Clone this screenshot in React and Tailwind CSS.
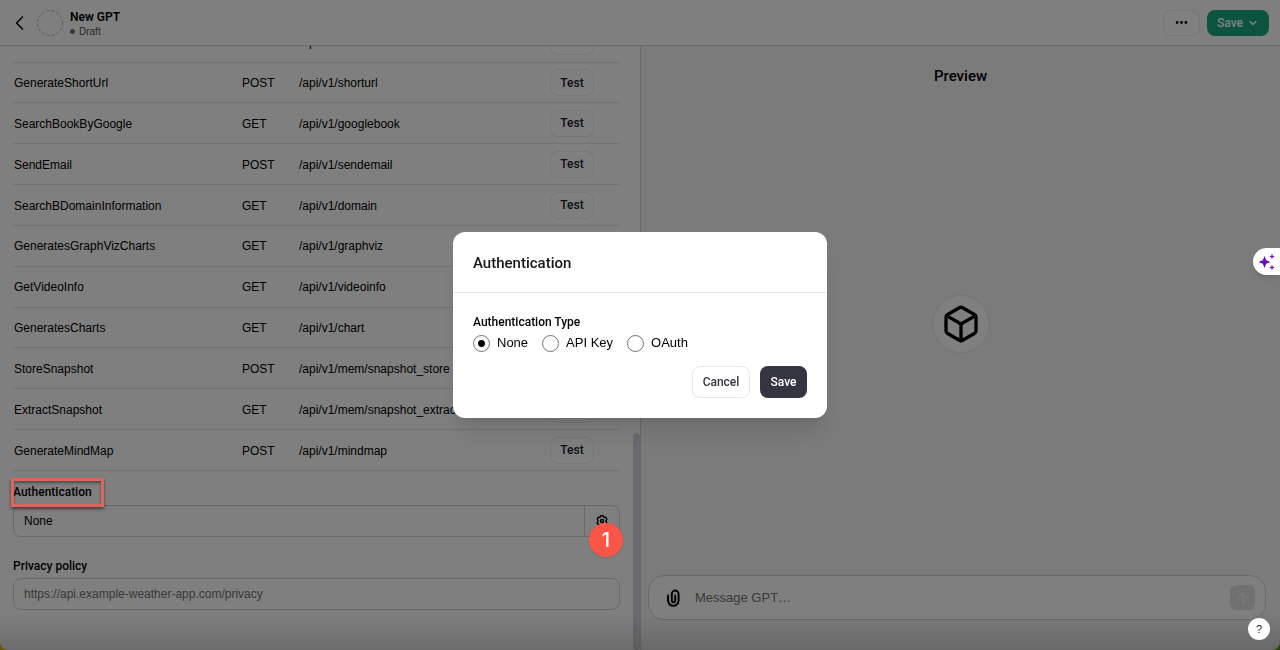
import { useState } from 'react';
import { ChevronDown, Ellipsis, ArrowUp, Box } from 'lucide-react';

const actions = [
  { name: '', method: '', path: '/api/v1/' },
  { name: 'GenerateShortUrl', method: 'POST', path: '/api/v1/shorturl' },
  { name: 'SearchBookByGoogle', method: 'GET', path: '/api/v1/googlebook' },
  { name: 'SendEmail', method: 'POST', path: '/api/v1/sendemail' },
  { name: 'SearchBDomainInformation', method: 'GET', path: '/api/v1/domain' },
  { name: 'GeneratesGraphVizCharts', method: 'GET', path: '/api/v1/graphviz' },
  { name: 'GetVideoInfo', method: 'GET', path: '/api/v1/videoinfo' },
  { name: 'GeneratesCharts', method: 'GET', path: '/api/v1/chart' },
  { name: 'StoreSnapshot', method: 'POST', path: '/api/v1/mem/snapshot_store' },
  { name: 'ExtractSnapshot', method: 'GET', path: '/api/v1/mem/snapshot_extract' },
  { name: 'GenerateMindMap', method: 'POST', path: '/api/v1/mindmap' },
];

const authTypes = ['None', 'API Key', 'OAuth'];

function GearIcon() {
  return (
    <svg viewBox="0 0 24 24" className="size-[14px]" fill="none" stroke="currentColor" strokeWidth="2.4" strokeLinejoin="round">
      <path d="M10 3h4l1.2 2.6 2.8-.3 2.2 3.6L18.600 12l1.600 3.100-2.200 3.600-2.800-.3L14 21h-4l-1.200-2.600-2.800.3-2.200-3.600L5.400 12 3.800 8.900 6 5.300l2.800.3z" />
      <circle cx="12" cy="12" r="2.600" />
    </svg>
  );
}

function PaperclipIcon() {
  return (
    <svg viewBox="0 0 20 20" className="size-5" fill="none" stroke="currentColor" strokeWidth="2" strokeLinecap="round">
      <path d="M5 7.500v5a5.300 5.300 0 0 0 10.600 0V6a3.400 3.400 0 0 0-6.800 0v6.500a1.700 1.700 0 0 0 3.400 0V7.500" />
    </svg>
  );
}

function SparkleIcon() {
  return (
    <svg viewBox="0 0 18 18" className="size-[18px]" fill="#6a0dc2">
      <path d="M7.500 3L9.200 7.300 13.500 9 9.200 10.700 7.500 15 5.800 10.700 1.500 9 5.800 7.300Z" />
      <path d="M15 .8L15.800 2.700 17.700 3.500 15.800 4.300 15 6.200 14.200 4.300 12.300 3.500 14.200 2.700Z" />
      <path d="M15 11.800L15.800 13.700 17.700 14.500 15.800 15.300 15 17.200 14.200 15.300 12.300 14.500 14.200 13.700Z" />
    </svg>
  );
}

function Header() {
  return (
    <header className="flex h-[46px] shrink-0 items-center justify-between border-b border-gray-300 bg-white pr-[11px] pl-3">
      <div className="flex items-center">
        <button aria-label="Back" className="flex w-4 justify-center">
          <svg viewBox="0 0 16 16" className="size-4" fill="none" stroke="currentColor" strokeWidth="1.500" strokeLinecap="round" strokeLinejoin="round">
            <path d="M10.500 2 4.500 8l6 6" />
          </svg>
        </button>
        <svg viewBox="0 0 26 26" className="ml-[9px] size-[26px]" fill="none" stroke="#b4b4bb">
          <circle cx="13" cy="13" r="12.500" strokeDasharray="3 2" />
        </svg>
        <div className="ml-[7px] pt-px">
          <h1 className="font-['Roboto'] text-[12px] leading-4 font-semibold">New GPT</h1>
          <p className="flex items-center gap-1 text-[10px] leading-[13px] text-neutral-600">
            <span className="size-[5px] rounded-full bg-neutral-500" />
            Draft
          </p>
        </div>
      </div>
      <div className="flex items-center gap-[7px]">
        <button aria-label="More" className="flex h-[26px] w-[37px] items-center justify-center rounded-lg border border-[#ececf1]">
          <Ellipsis className="size-[15px]" strokeWidth={2.5} />
        </button>
        <button className="flex h-[26px] w-[62px] items-center justify-center gap-1 rounded-lg bg-[#19a881] font-['Roboto'] text-[12px] font-medium text-white">
          Save
          <ChevronDown className="size-3" strokeWidth={3} />
        </button>
      </div>
    </header>
  );
}

function ActionsTable() {
  return (
    <table className="h-[449px] w-full shrink-0 table-fixed text-left text-[12px] leading-4">
      <tbody>
        {actions.map((action) => (
          <tr key={action.path} className="border-b border-[#e6e6ea]">
            <td className="pt-px pl-px">{action.name}</td>
            <td className="w-[57px] pt-px">{action.method}</td>
            <td className="w-[251px] pt-px whitespace-nowrap">{action.path}</td>
            <td className="w-[70px]">
              <button className="flex h-[27px] w-11 items-center justify-center rounded-lg border border-[#ececf1] font-['Roboto'] font-medium text-[#202123]">
                Test
              </button>
            </td>
          </tr>
        ))}
      </tbody>
    </table>
  );
}

function ConfigurePanel({ auth }) {
  return (
    <section className="flex min-h-0 min-w-0 bg-white">
      <div className="flex min-w-0 flex-1 flex-col justify-end overflow-hidden px-[13px] pb-10">
        <ActionsTable />
        <div className="mt-3 flex shrink-0">
          <label htmlFor="auth" className="relative font-['Roboto'] text-[12px] leading-[18px] font-medium">
            Authentication
            <span className="absolute -top-[5px] -right-3 -bottom-[6px] -left-[2px] z-20 border-3 border-[#dc655c] shadow-[0_2px_3px_rgba(0,0,0,0.5),inset_0_2px_3px_rgba(0,0,0,0.4)]" />
          </label>
        </div>
        <div className="mt-1 flex h-8 shrink-0 rounded-lg border border-gray-300">
          <input id="auth" readOnly value={auth} className="min-w-0 flex-1 px-[10px] text-[12px] outline-none" />
          <button aria-label="Authentication settings" className="relative flex w-[35px] items-center justify-center border-l border-gray-300">
            <GearIcon />
            <span className="absolute top-[17px] left-1 z-20 flex size-[34px] items-center justify-center rounded-full bg-[#fa5546] font-['Inter'] text-[20px] font-medium text-white shadow">
              1
            </span>
          </button>
        </div>
        <label htmlFor="privacy" className="mt-5 shrink-0 font-['Roboto'] text-[12px] leading-[18px] font-medium">
          Privacy policy
        </label>
        <input
          id="privacy"
          placeholder="https://api.example-weather-app.com/privacy"
          className="mt-[3px] h-8 shrink-0 rounded-lg border border-gray-300 px-[10px] text-[12px] outline-none placeholder:text-neutral-500"
        />
      </div>
      <div className="flex w-[7px] flex-col justify-end">
        <div className="h-[36%] rounded-full bg-[#d7d7df]" />
      </div>
    </section>
  );
}

function PreviewPanel() {
  return (
    <section className="flex min-w-0 flex-col border-l border-gray-300 bg-[#f7f7f8] pt-5 pb-[30px]">
      <h2 className="text-center font-['Roboto'] text-[15px] leading-5 font-medium">Preview</h2>
      <div className="flex flex-1 items-center justify-center pb-[14px]">
        <div className="flex size-[58px] items-center justify-center rounded-full border border-gray-200 bg-white">
          <Box className="size-10" strokeWidth={2} />
        </div>
      </div>
      <div className="mr-[14px] ml-[7px] flex h-[45px] items-center rounded-2xl border border-gray-300 bg-white pr-[10px] pl-[14px]">
        <button aria-label="Attach file">
          <PaperclipIcon />
        </button>
        <input
          aria-label="Message"
          placeholder="Message GPT…"
          className="ml-3 min-w-0 flex-1 text-[13px] outline-none placeholder:text-neutral-500"
        />
        <button aria-label="Send" className="flex size-[25px] items-center justify-center rounded-md bg-[#e3e3e3] text-[#f7f7f8]">
          <ArrowUp className="size-4" />
        </button>
      </div>
    </section>
  );
}

function AuthDialog({ auth, setAuth }) {
  return (
    <div className="fixed inset-0 z-10 flex items-center justify-center bg-black/50">
      <div role="dialog" aria-labelledby="dialog-title" className="w-[374px] rounded-xl bg-white shadow-xl">
        <h2
          id="dialog-title"
          className="border-b border-gray-200 px-5 pt-[19px] pb-[17px] font-['Roboto'] text-[15px] leading-6 font-medium text-neutral-900"
        >
          Authentication
        </h2>
        <div className="p-5">
          <fieldset>
            <legend className="font-['Roboto'] text-[12px] leading-[18px] font-medium">Authentication Type</legend>
            <div className="flex h-6 items-center gap-[14px]">
              {authTypes.map((type) => (
                <label key={type} className="flex items-center gap-[7px] text-[13px]">
                  <input
                    type="radio"
                    name="auth-type"
                    checked={auth === type}
                    onChange={() => setAuth(type)}
                    className="size-[17px] appearance-none rounded-full border border-neutral-500 checked:bg-[radial-gradient(circle,#000_3px,transparent_4px)]"
                  />
                  {type}
                </label>
              ))}
            </div>
          </fieldset>
          <div className="mt-[11px] flex justify-end gap-[10px] font-['Roboto'] text-[12px] font-medium">
            <button className="h-8 w-[58px] rounded-lg border border-gray-200 text-[#353740]">Cancel</button>
            <button className="h-8 w-[47px] rounded-lg bg-[#343541] text-white">Save</button>
          </div>
        </div>
      </div>
    </div>
  );
}

export default function App() {
  const [auth, setAuth] = useState('None');

  return (
    <div className="h-screen bg-linear-to-r from-yellow-400 to-lime-600 font-['Liberation_Sans',sans-serif] text-black">
      <div className="flex h-full flex-col overflow-hidden rounded-b-lg">
        <Header />
        <main className="grid min-h-0 flex-1 grid-cols-2 grid-rows-1">
          <ConfigurePanel auth={auth} />
          <PreviewPanel />
        </main>
      </div>
      <div className="fixed inset-x-0 bottom-0 h-9 bg-linear-to-b from-transparent to-black/15" />
      <AuthDialog auth={auth} setAuth={setAuth} />
      <button aria-label="Assistant" className="fixed top-[248px] right-0 z-20 flex h-[27px] w-[27px] items-center rounded-l-full bg-white pl-1 shadow-md">
        <SparkleIcon />
      </button>
      <button aria-label="Help" className="fixed right-[10px] bottom-[10px] z-20 size-[22px] rounded-full bg-white text-[11px] text-neutral-800">
        ?
      </button>
    </div>
  );
}
